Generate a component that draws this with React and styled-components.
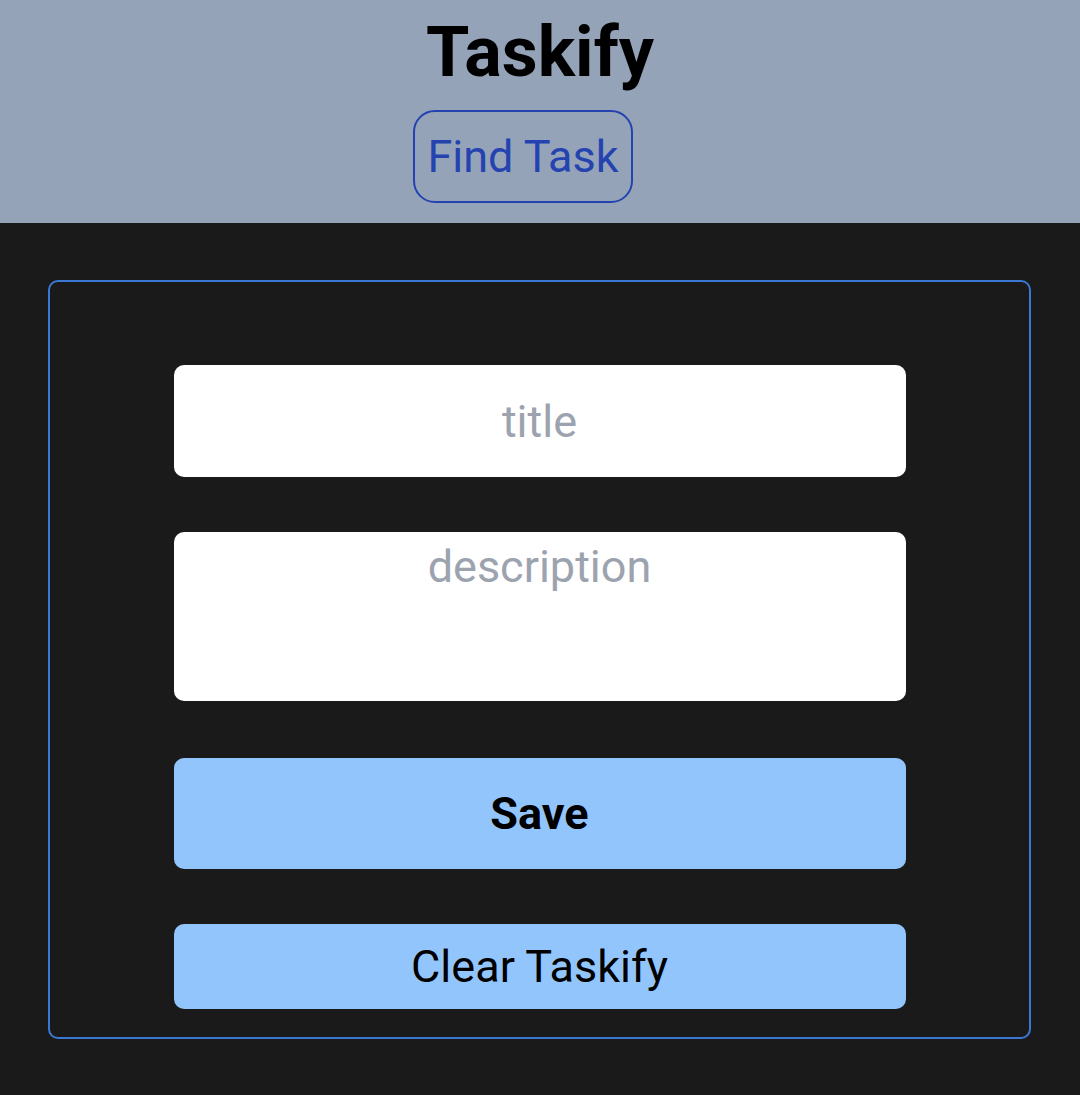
import React from 'react';
import styled, { createGlobalStyle } from 'styled-components';

const GlobalStyle = createGlobalStyle`
  * { box-sizing: border-box; }
  body {
    margin: 0;
    background: #1a1a1a;
    font-family: Roboto, "Liberation Sans", sans-serif;
  }
`;

const Page = styled.div`
  min-height: 1095px;
  background: #1a1a1a;
`;

const Header = styled.header`
  background: #94a3b8;
  height: 223px;
  display: flex;
  flex-direction: column;
  align-items: center;
  padding-top: 10px;
`;

const Title = styled.h1`
  margin: 0;
  font-size: 70px;
  line-height: 84px;
  font-weight: 700;
  color: #000;
`;

const FindButton = styled.button`
  margin-top: 16px;
  margin-right: 34px;
  height: 93px;
  padding: 0 12px;
  background: transparent;
  border: 2px solid #2543b0;
  border-radius: 22px;
  color: #2543b0;
  font-family: inherit;
  font-size: 45px;
`;

const Main = styled.main`
  padding: 57px 49px 0 48px;
`;

const Card = styled.form`
  border: 2px solid #3b78d4;
  border-radius: 10px;
  padding: 83px 0 28px;
  display: flex;
  flex-direction: column;
  align-items: center;
  gap: 55px;
`;

const field = `
  width: 732px;
  border: none;
  border-radius: 10px;
  background: #fff;
  font-family: Roboto, "Liberation Sans", sans-serif;
  font-size: 45px;
  text-align: center;
  color: #111;
  outline: none;
  &::placeholder { color: #9ca3af; }
`;

const TitleInput = styled.input`
  ${field}
  height: 112px;
`;

const DescInput = styled.textarea`
  ${field}
  height: 169px;
  padding-top: 8px;
  resize: none;
`;

const ActionButton = styled.button`
  width: 732px;
  height: ${p => (p.$tall ? '111px' : '85px')};
  margin-top: ${p => (p.$tall ? '2px' : '0')};
  border: none;
  border-radius: 10px;
  background: #93c5fd;
  color: #000;
  font-family: inherit;
  font-size: 45px;
  font-weight: ${p => (p.$bold ? 700 : 400)};
`;

export default function App() {
  return (
    <Page>
      <GlobalStyle />
      <Header>
        <Title>Taskify</Title>
        <FindButton>Find Task</FindButton>
      </Header>
      <Main>
        <Card onSubmit={e => e.preventDefault()}>
          <TitleInput placeholder="title" />
          <DescInput placeholder="description" />
          <ActionButton $tall $bold type="submit">Save</ActionButton>
          <ActionButton type="button">Clear Taskify</ActionButton>
        </Card>
      </Main>
    </Page>
  );
}
